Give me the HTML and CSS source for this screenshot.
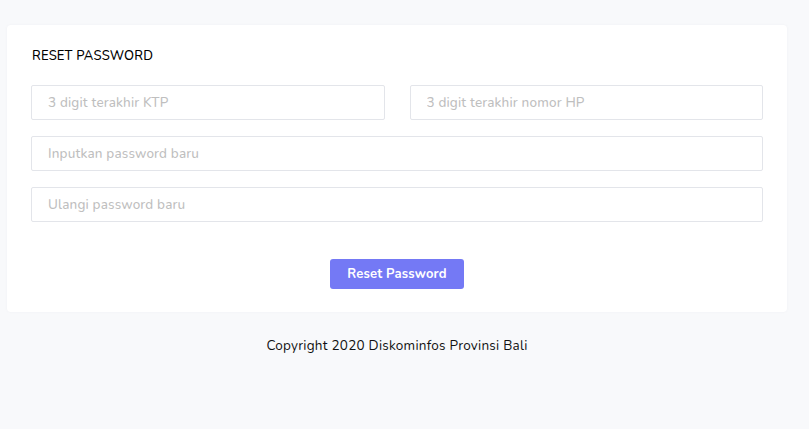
FILE: index.html
```html
<!DOCTYPE html>
<html lang="id">
<head>
<meta charset="utf-8">
<title>Reset Password</title>
<link rel="stylesheet" href="styles.css">
</head>
<body>
<div class="wrap">
  <div class="card">
    <h4 class="title">RESET PASSWORD</h4>
    <form class="form">
      <div class="row two">
        <input class="field" type="text" placeholder="3 digit terakhir KTP">
        <input class="field" type="text" placeholder="3 digit terakhir nomor HP">
      </div>
      <div class="row">
        <input class="field" type="password" placeholder="Inputkan password baru">
      </div>
      <div class="row">
        <input class="field" type="password" placeholder="Ulangi password baru">
      </div>
      <div class="actions">
        <button class="btn" type="button">Reset Password</button>
      </div>
    </form>
  </div>
  <p class="footer">Copyright 2020 Diskominfos Provinsi Bali</p>
</div>
</body>
</html>
```
FILE: styles.css
```css
* { box-sizing: border-box; }
html, body { margin: 0; padding: 0; }
body {
  background: #f8f9fb;
  font-family: "Nunito", "Lato", "Noto Sans", sans-serif;
  color: #111;
  width: 809px;
  height: 429px;
  overflow: hidden;
}
.wrap {
  padding: 25px 22px 0 7px;
}
.card {
  background: #fff;
  border-radius: 4px;
  padding: 24px 24px 23px 24px;
  box-shadow: 0 0 3px rgba(30, 40, 80, 0.04);
}
.title {
  margin: 0 0 22px 1px;
  font-size: 13px;
  font-weight: 500;
  line-height: 14px;
  letter-spacing: 0.2px;
  color: #000;
}
.form { display: flex; flex-direction: column; }
.row { display: flex; gap: 25px; margin-bottom: 16px; }
.row.two .field { flex: 1 1 0; }
.field {
  flex: 1 1 auto;
  width: 100%;
  height: 35px;
  border: 1px solid #e3e5ea;
  border-radius: 2px;
  padding: 0 16px;
  font-family: inherit;
  font-size: 13.5px;
  font-weight: 500;
  letter-spacing: 0.15px;
  color: #333;
  background: #fff;
  outline: none;
}
.field::placeholder { color: #bfbfbf; }
.actions {
  display: flex;
  justify-content: center;
  margin-top: 21px;
}
.btn {
  width: 134px;
  height: 30px;
  border: 0;
  border-radius: 3px;
  background: #7479f5;
  color: #fff;
  font-family: inherit;
  font-size: 13px;
  font-weight: 700;
  letter-spacing: 0.2px;
  cursor: pointer;
}
.footer {
  margin: 24px 0 0 0;
  text-align: center;
  font-size: 13.5px;
  letter-spacing: 0.25px;
  color: #111;
}
```
